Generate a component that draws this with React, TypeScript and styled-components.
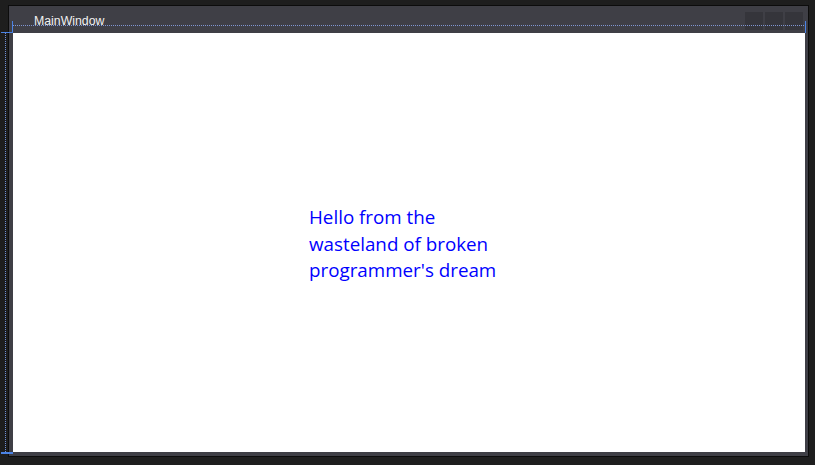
import React from "react";
import styled, { createGlobalStyle } from "styled-components";

const Global = createGlobalStyle`
  html, body { margin: 0; padding: 0; background: #1e1e1e; }
  body { width: 815px; height: 465px; overflow: hidden; }
`;

const Stage = styled.div`
  position: relative;
  width: 815px;
  height: 465px;
  padding: 5px 6px 8px 8px;
  box-sizing: border-box;
  background: #1e1e1e;
`;

const Frame = styled.div`
  width: 801px;
  height: 452px;
  box-sizing: border-box;
  border: 1px solid #0c0c0c;
  background: #3f3f46;
  display: flex;
  flex-direction: column;
`;

const TitleBar = styled.div`
  height: 27px;
  flex: none;
  display: flex;
  align-items: flex-start;
  padding: 0 5px 0 25px;
  box-sizing: border-box;
`;

const Title = styled.span`
  margin-top: 8px;
  font-family: "Liberation Sans", Arial, sans-serif;
  font-size: 12.3px;
  line-height: 14px;
  color: #f1f1f1;
  position: relative;
  z-index: 2;
`;

const Buttons = styled.div`
  margin-left: auto;
  margin-top: 6px;
  display: flex;
  gap: 2px;
`;

const CaptionButton = styled.div`
  width: 18px;
  height: 18px;
  background: #35353b;
`;

const Body = styled.div`
  flex: 1;
  padding: 0 3px 4px 4px;
  display: flex;
`;

const Content = styled.div`
  flex: 1;
  background: #ffffff;
  display: flex;
  align-items: center;
  justify-content: center;
`;

const Message = styled.div`
  width: 198px;
  margin-top: 3px;
  margin-right: 2px;
  font-family: "Open Sans", "Noto Sans", sans-serif;
  font-size: 18.8px;
  line-height: 26.5px;
  color: #0000ff;
`;

const HDots = styled.div<{ $x: number; $y: number; $w: number }>`
  position: absolute;
  left: ${(p) => p.$x}px;
  top: ${(p) => p.$y}px;
  width: ${(p) => p.$w}px;
  height: 1px;
  background-image: repeating-linear-gradient(to right, #7f95d2 0 1px, transparent 1px 2px);
  z-index: 1;
`;

const VDots = styled.div<{ $x: number; $y: number; $h: number }>`
  position: absolute;
  left: ${(p) => p.$x}px;
  top: ${(p) => p.$y}px;
  width: 1px;
  height: ${(p) => p.$h}px;
  background-image: repeating-linear-gradient(to bottom, #6f8fd8 0 1px, transparent 1px 2px);
`;

const Guide = styled.div<{ $x: number; $y: number; $w: number; $h: number }>`
  position: absolute;
  left: ${(p) => p.$x}px;
  top: ${(p) => p.$y}px;
  width: ${(p) => p.$w}px;
  height: ${(p) => p.$h}px;
  background: #4a82e4;
  z-index: 3;
`;

export default function App() {
  return (
    <Stage>
      <Global />
      <Frame>
        <TitleBar>
          <Title>MainWindow</Title>
          <Buttons>
            <CaptionButton />
            <CaptionButton />
            <CaptionButton />
          </Buttons>
        </TitleBar>
        <Body>
          <Content>
            <Message>
              Hello from the
              <br />
              wasteland of broken
              <br />
              programmer's dream
            </Message>
          </Content>
        </Body>
      </Frame>
      <HDots $x={13} $y={25} $w={792} />
      <VDots $x={5} $y={33} $h={419} />
      <Guide $x={12} $y={21} $w={1} $h={12} />
      <Guide $x={1} $y={32} $w={12} $h={1} />
      <Guide $x={1} $y={452} $w={12} $h={2} />
      <Guide $x={805} $y={21} $w={1} $h={12} />
    </Stage>
  );
}
